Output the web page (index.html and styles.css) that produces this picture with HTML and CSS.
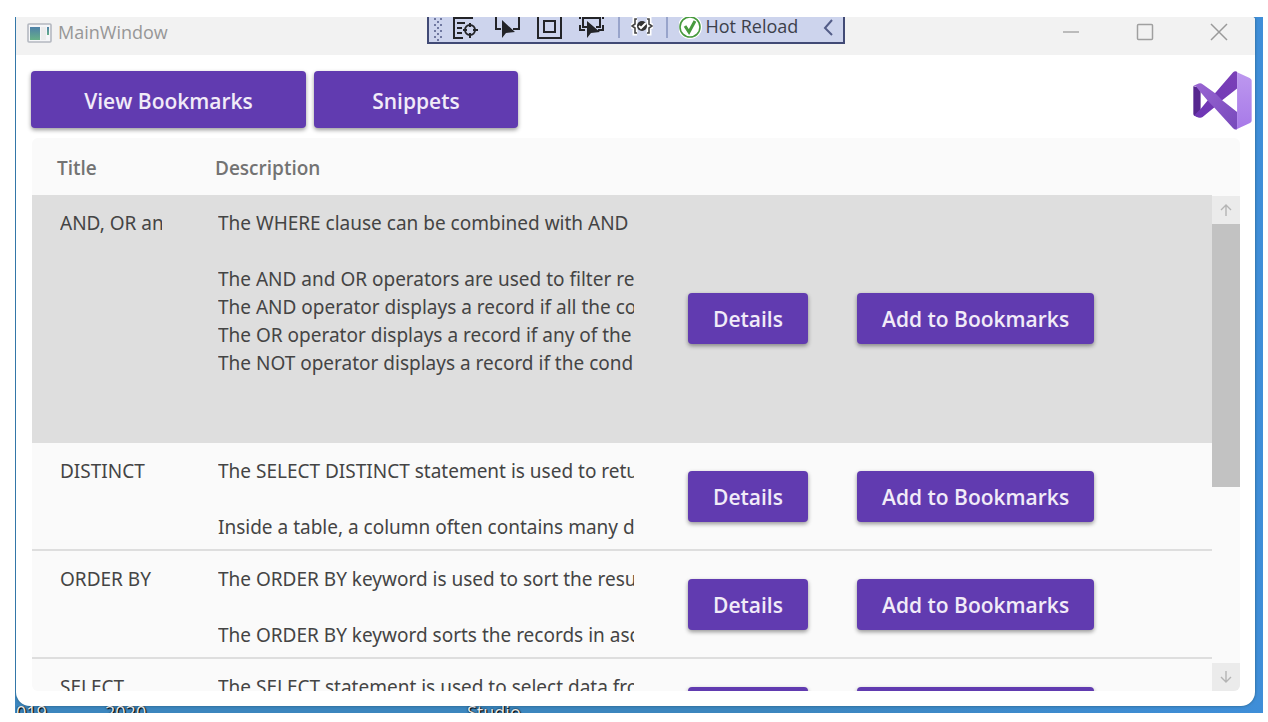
FILE: index.html
```html
<!DOCTYPE html>
<html lang="en">
<head>
<meta charset="utf-8">
<title>MainWindow</title>
<link rel="stylesheet" href="styles.css">
</head>
<body>
<div class="desktop">
  <main class="window">
    <header class="titlebar">
      <div class="caption">
        <svg class="app-icon" width="25" height="20" viewBox="0 0 25 20">
          <defs><linearGradient id="pane" x1="0" y1="0" x2="0" y2="1"><stop offset="0" stop-color="#4f81a8"/><stop offset="1" stop-color="#67b088"/></linearGradient></defs>
          <rect x="1" y="1" width="23" height="18" rx="1" fill="#f5f6f8" stroke="#b4b8c0" stroke-width="1.6"/>
          <rect x="3" y="4" width="10" height="13" fill="url(#pane)"/>
          <rect x="14" y="4" width="5" height="13" fill="#ececec"/>
          <rect x="20" y="4" width="2" height="8" fill="url(#pane)"/>
        </svg>
        <span>MainWindow</span>
      </div>
      <div class="debugbar">
        <svg class="grip" width="12" height="25" viewBox="0 0 12 25" fill="#7078a0"><g id="dots"><rect x="1" y="1" width="2" height="2"/><rect x="7" y="1" width="2" height="2"/><rect x="4" y="4" width="2" height="2"/><rect x="1" y="7" width="2" height="2"/><rect x="7" y="7" width="2" height="2"/><rect x="4" y="10" width="2" height="2"/></g><use href="#dots" y="12"/></svg>
        <button class="tool" aria-label="Go to live visual tree"><svg width="26" height="25" viewBox="0 0 26 25" fill="none" stroke="#232428" stroke-width="2"><path d="M0 1h20M4 6h8M4 11h5M4 16h5M0 21h10M1 1v20"/><circle cx="17" cy="13" r="5"/><path d="M17 6v4M17 16v5M10 13h4M20 13h5"/></svg></button>
        <button class="tool" aria-label="Select element"><svg width="26" height="25" viewBox="0 0 26 25"><path d="M1 0v12h5M24 0v12h-6" fill="none" stroke="#232428" stroke-width="2"/><path d="M7 3v18l4-5 9-1z" fill="#232428"/></svg></button>
        <button class="tool" aria-label="Display layout adorners"><svg width="26" height="25" viewBox="0 0 26 25" fill="none" stroke="#232428"><path d="M1 0v21h23V0" stroke-width="2"/><rect x="7" y="4" width="11" height="11" stroke-width="2"/></svg></button>
        <button class="tool" aria-label="Track focused element"><svg width="26" height="25" viewBox="0 0 26 25"><path d="M4 0v10h4M21 0v10h-4M5 1h16M0 1h2M23 1h2M1 8v5h5M24 8v5h-5" fill="none" stroke="#232428" stroke-width="2"/><path d="M8 4v17l4-5 9-1z" fill="#232428"/></svg></button>
        <span class="divider"></span>
        <button class="tool" aria-label="Binding failures"><svg width="22" height="25" viewBox="0 0 22 25" fill="none" stroke="#fff" stroke-width="5"><path d="M6 2H4v5L1 9l3 2v5h2M16 2h2v5l3 2-3 2v5h-2"/><path d="M6 2H4v5L1 9l3 2v5h2M16 2h2v5l3 2-3 2v5h-2" stroke="#444" stroke-width="1.6"/><circle cx="11" cy="9" r="5" fill="#333" stroke="none"/><path d="M8 9l2 2 5-5" stroke-width="2"/></svg></button>
        <span class="divider"></span>
        <button class="tool hot"><svg width="24" height="25" viewBox="0 0 24 25" fill="none"><circle cx="11" cy="10" r="12" fill="#fff"/><circle cx="11" cy="10" r="10" stroke="#479a3e" stroke-width="1.6"/><path d="M6 9l4 6 6-11" stroke="#479a3e" stroke-width="3"/></svg>Hot Reload</button>
        <button class="tool collapse" aria-label="Collapse"><svg width="10" height="18" viewBox="0 0 10 18" fill="none" stroke="#535d88" stroke-width="2"><path d="M9 2L2 10l7 7"/></svg></button>
      </div>
      <div class="controls">
        <button aria-label="Minimize"><svg width="18" height="18" viewBox="0 0 18 18" fill="none" stroke="#a9a9a9" stroke-width="1.5"><path d="M1 9h16"/></svg></button>
        <button aria-label="Maximize"><svg width="18" height="18" viewBox="0 0 18 18" fill="none" stroke="#a0a0a0" stroke-width="1.5"><rect x="1.5" y="1.5" width="15" height="15" rx="1"/></svg></button>
        <button aria-label="Close"><svg width="18" height="18" viewBox="0 0 18 18" fill="none" stroke="#9a9a9a" stroke-width="1.5"><path d="M1 1l16 16M17 1L1 17"/></svg></button>
      </div>
    </header>

    <nav class="actions">
      <button class="btn nav-btn wide">View Bookmarks</button>
      <button class="btn nav-btn">Snippets</button>
      <svg class="logo" width="59" height="59" viewBox="496 212 178 178" role="img" aria-label="Visual Studio">
        <defs>
          <linearGradient id="right" x1="0" y1="0" x2="0" y2="1"><stop offset="0" stop-color="#bd98ef"/><stop offset="1" stop-color="#a779e8"/></linearGradient>
          <linearGradient id="fall" x1="0" y1="0" x2="1" y2="1"><stop offset="0" stop-color="#9a66d3"/><stop offset="1" stop-color="#7749bb"/></linearGradient>
          <linearGradient id="rise" x1="0" y1="1" x2="1" y2="0"><stop offset="0" stop-color="#6d35b4"/><stop offset="1" stop-color="#7b40b8"/></linearGradient>
        </defs>
        <path d="M497 258L519 262V340L512 352L499 346Q497 345 497 341Z" fill="#56268f"/>
        <path d="M499 346L519 327L540 301L565 276L617 216Q622 211 629 214V265L584 300L560 322L525 351Q519 355 513 352Z" fill="url(#rise)"/>
        <path d="M497 259Q497 256 501 255L513 250Q519 247 525 252L565 281L584 300L629 336V388Q622 390 617 385L560 322L540 301L519 276L504 257Z" fill="url(#fall)"/>
        <path d="M629 216L667 233Q673 236 673 241V361Q673 366 668 369L624 389Q629 387 629 381Z" fill="url(#right)"/>
      </svg>
    </nav>

    <section class="card">
      <div class="table-area">
      <table class="snippets">
        <colgroup><col class="c-title"><col class="c-desc"><col class="c-details"><col></colgroup>
        <thead><tr><th>Title</th><th>Description</th><th></th><th></th></tr></thead>
        <tbody>
          <tr class="selected">
            <td><div class="clip">AND, OR and</div></td>
            <td><div class="clip">The WHERE clause can be combined with AND

The AND and OR operators are used to filter rec
The AND operator displays a record if all the co
The OR operator displays a record if any of the c
The NOT operator displays a record if the condi

&nbsp;</div></td>
            <td><button class="btn">Details</button></td>
            <td><button class="btn">Add to Bookmarks</button></td>
          </tr>
          <tr>
            <td><div class="clip">DISTINCT</div></td>
            <td><div class="clip">The SELECT DISTINCT statement is used to retur

Inside a table, a column often contains many du</div></td>
            <td><button class="btn">Details</button></td>
            <td><button class="btn">Add to Bookmarks</button></td>
          </tr>
          <tr>
            <td><div class="clip">ORDER BY</div></td>
            <td><div class="clip">The ORDER BY keyword is used to sort the result

The ORDER BY keyword sorts the records in asc</div></td>
            <td><button class="btn">Details</button></td>
            <td><button class="btn">Add to Bookmarks</button></td>
          </tr>
          <tr>
            <td><div class="clip">SELECT</div></td>
            <td><div class="clip">The SELECT statement is used to select data from

&nbsp;</div></td>
            <td><button class="btn">Details</button></td>
            <td><button class="btn">Add to Bookmarks</button></td>
          </tr>
        </tbody>
      </table>
      </div>
      <div class="scrollbar">
        <button aria-label="Scroll up"><svg width="12" height="12" viewBox="0 0 12 12" fill="none" stroke="#b4b4b4" stroke-width="1.4"><path d="M6 12V1M1 6l5-5 5 5"/></svg></button>
        <div class="track"><div class="thumb"></div></div>
        <button aria-label="Scroll down"><svg width="12" height="12" viewBox="0 0 12 12" fill="none" stroke="#b4b4b4" stroke-width="1.4"><path d="M6 0v11M1 6l5 5 5-5"/></svg></button>
      </div>
    </section>
  </main>
  <div class="wallpaper"><span class="year">019</span><span class="year-next">2020</span><span>Studio</span></div>
</div>
</body>
</html>
```
FILE: styles.css
```css
* { box-sizing: border-box; }
body {
  margin: 0;
  height: 100vh;
  padding: 17px 5px 9px 15px;
  background: #fff;
  font-family: "Open Sans", "Noto Sans", sans-serif;
  font-size: 19px;
  color: #444;
}
button {
  font: inherit;
  border: 0;
  padding: 0;
  background: none;
}
svg { display: block; flex: none; }

.desktop {
  height: 100%;
  display: flex;
  flex-direction: column;
  padding: 0 8px 0 1px;
  overflow: hidden;
  background: linear-gradient(90deg, #3c86be 60%, #3f8ed8);
}
.window {
  flex: 1;
  min-height: 0;
  display: flex;
  flex-direction: column;
  background: #fff;
  border-radius: 0 3px 14px 14px;
  box-shadow: 0 0 3px #2a5f80;
  overflow: hidden;
}

.titlebar {
  display: flex;
  align-items: flex-start;
  height: 38px;
  background: #f2f2f2;
}
.caption {
  flex: 1;
  display: flex;
  align-items: center;
  gap: 6px;
  padding: 3px 16px 0 11px;
  font-size: 18px;
  line-height: 25px;
  color: #979797;
}
.debugbar {
  display: flex;
  align-items: center;
  height: 27px;
  width: 418px;
  padding: 0 10px 0 4px;
  gap: 16px;
  background: #cdd4ed;
  border: solid #414a75;
  border-width: 0 2px 2px;
  overflow: hidden;
}
.grip { margin-right: -8px; }
.tool {
  display: flex;
  align-items: center;
}
.divider {
  flex: none;
  width: 2px;
  height: 21px;
  margin: 0 -5px 5px -3px;
  background: #98a4cb;
}
.hot {
  flex: 1;
  align-items: flex-start;
  gap: 3px;
  font-size: 18px;
  line-height: 18px;
  color: #3c3f4a;
  white-space: nowrap;
}
.collapse { padding-bottom: 5px; }
.controls {
  flex: 1;
  display: flex;
  justify-content: flex-end;
  gap: 56px;
  padding: 6px 27px 0 0;
}

.actions {
  display: flex;
  gap: 8px;
  padding: 16px 3px 8px 15px;
}
.btn {
  height: 51px;
  padding: 2px 25px 0;
  border-radius: 4px;
  background: #613bb0;
  color: #f1ebf8;
  font-size: 21px;
  font-weight: 600;
  white-space: nowrap;
  box-shadow: 0 2px 4px rgba(0, 0, 0, 0.4);
}
.nav-btn {
  width: 204px;
  height: 57px;
}
.wide { width: 275px; }
.logo { margin-left: auto; }

.card {
  flex: 1;
  min-height: 0;
  display: flex;
  margin: 0 15px 15px 16px;
  background: #fafafa;
  border-radius: 6px;
  overflow: hidden;
}
.table-area {
  flex: 1;
  min-width: 0;
}
.snippets {
  width: 100%;
  table-layout: fixed;
  border-spacing: 0;
}
.c-title { width: 158px; }
.c-desc { width: 472px; }
.c-details { width: 169px; }
th {
  height: 57px;
  padding: 2px 0 0 25px;
  text-align: left;
  font-weight: 600;
  color: #737373;
}
td {
  padding: 0 0 0 26px;
  border-bottom: 2px solid #dedede;
}
td:nth-child(-n+2) {
  padding: 14px 28px 8px;
  vertical-align: top;
}
.selected { background: #dedede; }
.clip {
  overflow: hidden;
  white-space: pre;
  font-family: "Noto Sans", sans-serif;
  line-height: 28px;
}

.scrollbar {
  flex: none;
  display: flex;
  flex-direction: column;
  width: 28px;
  padding-top: 58px;
}
.scrollbar button {
  display: flex;
  align-items: center;
  justify-content: center;
  flex: none;
  height: 28px;
  background: #ebebeb;
}
.track { flex: 1; }
.thumb {
  height: 60%;
  background: #c2c2c2;
}

.wallpaper {
  display: flex;
  height: 7px;
  overflow: hidden;
  font-size: 18px;
  line-height: 12px;
  color: #e8e8e8;
  text-shadow: 0 0 2px #000, 1px 1px 1px #000;
}
.year { width: 89px; }
.year-next { width: 362px; }
```
